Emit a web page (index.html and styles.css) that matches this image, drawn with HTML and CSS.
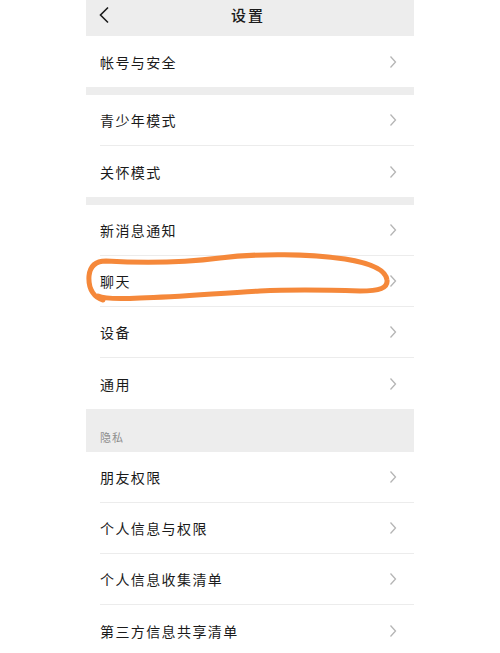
FILE: index.html
```html
<!DOCTYPE html>
<html lang="zh">
<head>
<meta charset="utf-8">
<title>设置</title>
<link rel="stylesheet" href="styles.css">
</head>
<body>
<div class="phone">
  <div class="header">
    <svg class="back" width="12" height="18" viewBox="0 0 12 18"><path d="M10 1.5 L2.5 9 L10 16.5" fill="none" stroke="#1a1a1a" stroke-width="1.6"/></svg>
    <div class="title">设置</div>
  </div>
  <div class="group">
    <div class="row"><span class="label">帐号与安全</span><svg class="chev" width="8" height="14" viewBox="0 0 8 14"><path d="M1.5 1.5 L6.5 7 L1.5 12.5" fill="none" stroke="#b5b5b5" stroke-width="1.3"/></svg></div>
  </div>
  <div class="gap"></div>
  <div class="group">
    <div class="row"><span class="label">青少年模式</span><svg class="chev" width="8" height="14" viewBox="0 0 8 14"><path d="M1.5 1.5 L6.5 7 L1.5 12.5" fill="none" stroke="#b5b5b5" stroke-width="1.3"/></svg></div>
    <div class="row"><span class="label">关怀模式</span><svg class="chev" width="8" height="14" viewBox="0 0 8 14"><path d="M1.5 1.5 L6.5 7 L1.5 12.5" fill="none" stroke="#b5b5b5" stroke-width="1.3"/></svg></div>
  </div>
  <div class="gap"></div>
  <div class="group">
    <div class="row"><span class="label">新消息通知</span><svg class="chev" width="8" height="14" viewBox="0 0 8 14"><path d="M1.5 1.5 L6.5 7 L1.5 12.5" fill="none" stroke="#b5b5b5" stroke-width="1.3"/></svg></div>
    <div class="row"><span class="label">聊天</span><svg class="chev" width="8" height="14" viewBox="0 0 8 14"><path d="M1.5 1.5 L6.5 7 L1.5 12.5" fill="none" stroke="#b5b5b5" stroke-width="1.3"/></svg></div>
    <div class="row"><span class="label">设备</span><svg class="chev" width="8" height="14" viewBox="0 0 8 14"><path d="M1.5 1.5 L6.5 7 L1.5 12.5" fill="none" stroke="#b5b5b5" stroke-width="1.3"/></svg></div>
    <div class="row"><span class="label">通用</span><svg class="chev" width="8" height="14" viewBox="0 0 8 14"><path d="M1.5 1.5 L6.5 7 L1.5 12.5" fill="none" stroke="#b5b5b5" stroke-width="1.3"/></svg></div>
  </div>
  <div class="section">隐私</div>
  <div class="group">
    <div class="row"><span class="label">朋友权限</span><svg class="chev" width="8" height="14" viewBox="0 0 8 14"><path d="M1.5 1.5 L6.5 7 L1.5 12.5" fill="none" stroke="#b5b5b5" stroke-width="1.3"/></svg></div>
    <div class="row"><span class="label">个人信息与权限</span><svg class="chev" width="8" height="14" viewBox="0 0 8 14"><path d="M1.5 1.5 L6.5 7 L1.5 12.5" fill="none" stroke="#b5b5b5" stroke-width="1.3"/></svg></div>
    <div class="row"><span class="label">个人信息收集清单</span><svg class="chev" width="8" height="14" viewBox="0 0 8 14"><path d="M1.5 1.5 L6.5 7 L1.5 12.5" fill="none" stroke="#b5b5b5" stroke-width="1.3"/></svg></div>
    <div class="row"><span class="label">第三方信息共享清单</span><svg class="chev" width="8" height="14" viewBox="0 0 8 14"><path d="M1.5 1.5 L6.5 7 L1.5 12.5" fill="none" stroke="#b5b5b5" stroke-width="1.3"/></svg></div>
  </div>
  <svg class="scribble" width="328" height="60" viewBox="86 250 328 60">
    <path d="M103 300 C 95 298, 88 290, 89 276 C 90 266, 96 261, 106 261 C 140 263, 180 263, 220 258 C 260 253, 310 254, 345 259 C 370 263, 386 270, 387 280 C 388 288, 380 291, 360 291 C 330 290, 300 289, 260 291 C 220 293, 180 297, 140 298 C 120 299, 104 299, 98 296" fill="none" stroke="#f5883a" stroke-width="5" stroke-linecap="round" stroke-linejoin="round"/>
  </svg>
</div>
</body>
</html>
```
FILE: styles.css
```css
html, body {
  margin: 0;
  padding: 0;
  background: #ffffff;
}
body {
  font-family: "Noto Sans CJK SC", "Noto Sans", sans-serif;
  color: #1a1a1a;
  height: 653px;
  overflow: hidden;
}
.phone {
  position: relative;
  width: 328px;
  margin: 0 auto 0 86px;
  background: #ededed;
}
.header {
  position: relative;
  height: 36px;
  display: flex;
  align-items: flex-start;
  justify-content: center;
  background: #ededed;
}
.back {
  position: absolute;
  left: 12px;
  top: 6px;
}
.title {
  font-size: 15px;
  font-weight: 500;
  line-height: 30px;
  letter-spacing: 2px;
  margin-left: -4px;
}
.group {
  background: #ffffff;
}
.row {
  height: 51px;
  display: flex;
  align-items: center;
  justify-content: space-between;
  margin-left: 14px;
  padding-right: 17px;
  box-sizing: border-box;
  border-bottom: 1px solid #ececec;
}
.row:last-child {
  border-bottom: none;
}
.label {
  font-size: 14px;
  letter-spacing: 1.4px;
}
.gap {
  height: 8px;
}
.section {
  height: 43px;
  box-sizing: border-box;
  padding: 20px 0 0 14px;
  font-size: 11px;
  color: #8e8e8e;
  letter-spacing: 1px;
}
.scribble {
  position: absolute;
  left: 0;
  top: 250px;
  pointer-events: none;
}
```
